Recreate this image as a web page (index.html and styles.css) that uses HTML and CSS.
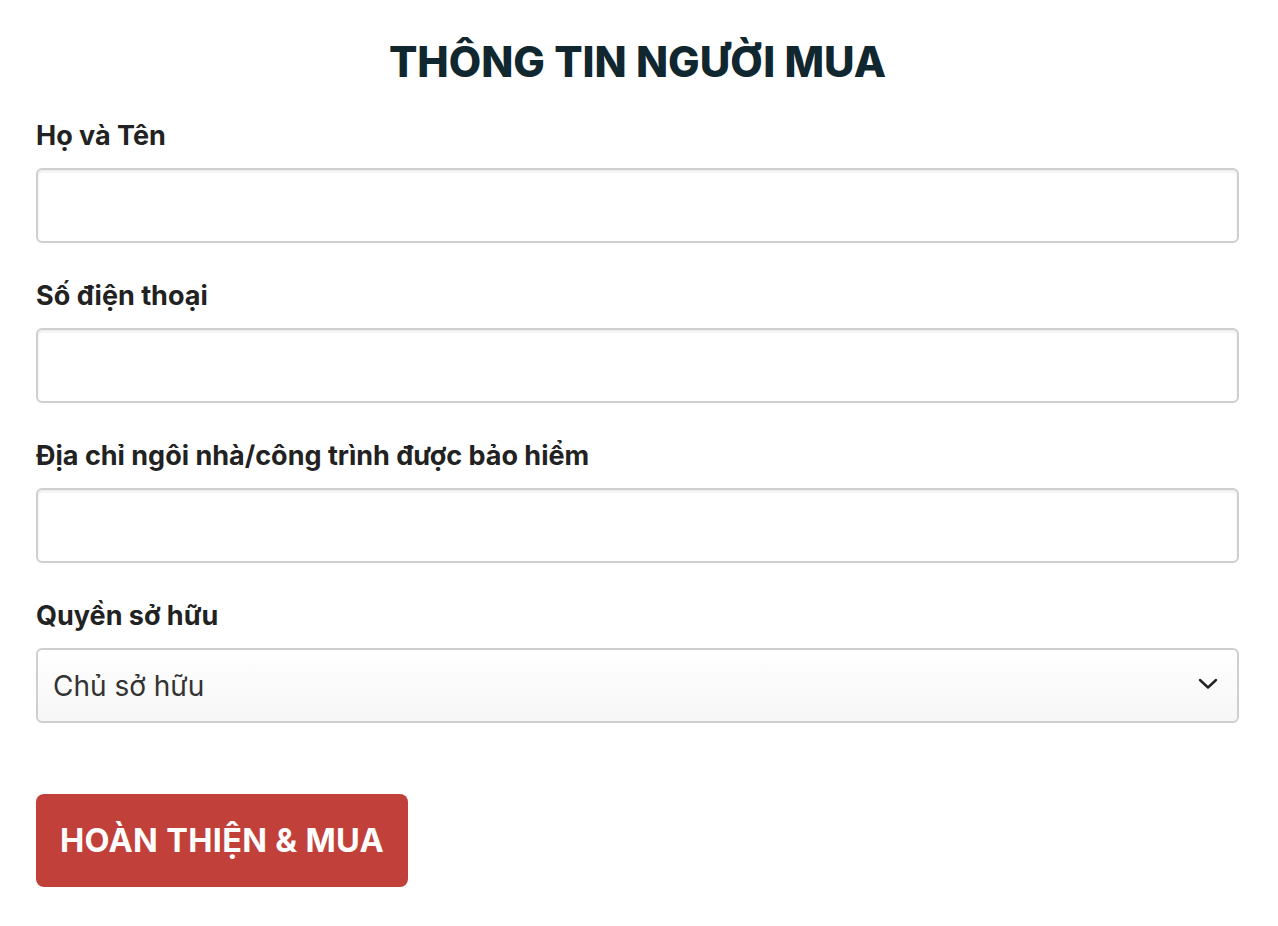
FILE: index.html
```html
<!DOCTYPE html>
<html lang="vi">
<head>
<meta charset="utf-8">
<title>Thông tin người mua</title>
<link rel="stylesheet" href="styles.css">
</head>
<body>
<form class="buyer-form">
  <h1 class="form-title">THÔNG TIN NGƯỜI MUA</h1>
  <div class="field">
    <label class="field-label" for="name">Họ và Tên</label>
    <input class="field-input" id="name" type="text">
  </div>
  <div class="field">
    <label class="field-label" for="phone">Số điện thoại</label>
    <input class="field-input" id="phone" type="text">
  </div>
  <div class="field">
    <label class="field-label" for="addr">Địa chỉ ngôi nhà/công trình được bảo hiểm</label>
    <input class="field-input" id="addr" type="text">
  </div>
  <div class="field">
    <label class="field-label" for="own">Quyền sở hữu</label>
    <div class="select-wrap">
      <select class="field-select" id="own">
        <option>Chủ sở hữu</option>
      </select>
      <svg class="chevron" width="20" height="12" viewBox="0 0 20 12"><path d="M2 2 L10 9.5 L18 2" fill="none" stroke="#222" stroke-width="2.4" stroke-linecap="round" stroke-linejoin="round"/></svg>
    </div>
  </div>
  <button class="submit-btn" type="button">HOÀN THIỆN &amp; MUA</button>
</form>
</body>
</html>
```
FILE: styles.css
```css
* { box-sizing: border-box; }
html, body { margin: 0; padding: 0; background: #fff; }
body { font-family: Inter, "Noto Sans", sans-serif; }
.buyer-form {
  padding: 32px 39px 0 36px;
  display: flex;
  flex-direction: column;
}
.form-title {
  margin: 0 0 26px 0;
  text-align: center;
  font-size: 42px;
  line-height: 60px;
  font-weight: 800;
  color: #11272f;
  letter-spacing: 0;
}
.field { display: flex; flex-direction: column; margin-bottom: 35px; }
.field-label {
  font-size: 27px;
  line-height: 36px;
  font-weight: 700;
  color: #222;
  letter-spacing: 0;
  margin-bottom: 14px;
}
.field-input, .field-select {
  width: 100%;
  height: 75px;
  border: 2px solid #cfcfcf;
  border-radius: 6px;
  background: #fff;
  box-shadow: inset 0 2px 3px rgba(0,0,0,0.08);
  font-family: Inter, "Noto Sans", sans-serif;
  font-size: 28px;
  outline: none;
}
.select-wrap { position: relative; }
.field-select {
  appearance: none;
  -webkit-appearance: none;
  background: linear-gradient(#ffffff, #f6f6f6);
  padding: 0 15px;
  color: #333;
  font-weight: 400;
  box-shadow: none;
}
.chevron { position: absolute; right: 21px; top: 30px; pointer-events: none; }
.submit-btn {
  align-self: flex-start;
  margin-top: 36px;
  width: 372px;
  height: 93px;
  border: none;
  border-radius: 8px;
  background: #c2403a;
  color: #fff;
  font-family: Inter, "Noto Sans", sans-serif;
  font-weight: 700;
  font-size: 32.5px;
  letter-spacing: 0.3px;
  cursor: pointer;
}
```
